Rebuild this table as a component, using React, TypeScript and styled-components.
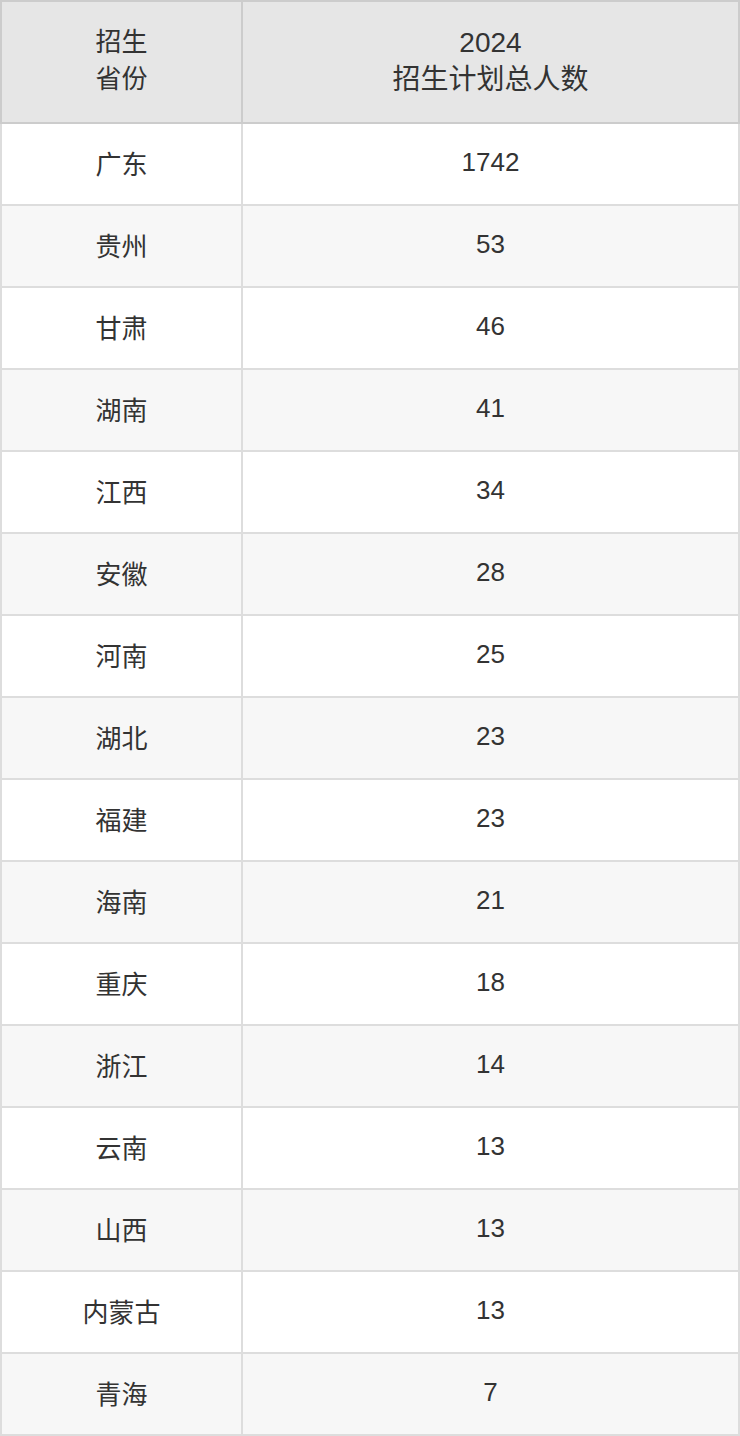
import { createGlobalStyle, styled } from 'styled-components';

const rows: [string, number][] = [
  ['广东', 1742],
  ['贵州', 53],
  ['甘肃', 46],
  ['湖南', 41],
  ['江西', 34],
  ['安徽', 28],
  ['河南', 25],
  ['湖北', 23],
  ['福建', 23],
  ['海南', 21],
  ['重庆', 18],
  ['浙江', 14],
  ['云南', 13],
  ['山西', 13],
  ['内蒙古', 13],
  ['青海', 7],
];

const App = () => {
  return (
    <>
      <GlobalStyle />
      <StyledTable>
        <colgroup>
          <col style={{ width: 241 }} />
          <col />
        </colgroup>
        <thead>
          <tr>
            <StyledHeadCell>
              招生
              <br />
              省份
            </StyledHeadCell>
            <StyledHeadCell $wide>
              2024
              <br />
              招生计划总人数
            </StyledHeadCell>
          </tr>
        </thead>
        <tbody>
          {rows.map(([name, count], i) => (
            <StyledRow key={name} $striped={i % 2 === 1}>
              <StyledCell>{name}</StyledCell>
              <StyledCell>{count}</StyledCell>
            </StyledRow>
          ))}
        </tbody>
      </StyledTable>
    </>
  );
};

export default App;

const GlobalStyle = createGlobalStyle`
  * {
    box-sizing: border-box;
  }
  body {
    margin: 0;
    background: #ffffff;
    font-family: "Liberation Sans", "Noto Sans CJK SC", sans-serif;
  }
`;

const StyledTable = styled.table`
  width: 740px;
  border-collapse: collapse;
  table-layout: fixed;
  color: #333333;
  font-size: 26px;
`;

const StyledHeadCell = styled.th<{ $wide?: boolean }>`
  height: 122px;
  padding: 0 0 3px;
  font-weight: normal;
  font-size: ${({ $wide }) => ($wide ? '28px' : '26px')};
  line-height: 37px;
  text-align: center;
  vertical-align: middle;

  background-color: #e6e6e6;
  border: 2px solid #cccccc;
`;

const StyledRow = styled.tr<{ $striped: boolean }>`
  background-color: ${({ $striped }) => ($striped ? '#f7f7f7' : '#ffffff')};
`;

const StyledCell = styled.td`
  height: 82px;
  padding: 0 0 4px;
  text-align: center;
  vertical-align: middle;

  border: 2px solid #dddddd;
`;
